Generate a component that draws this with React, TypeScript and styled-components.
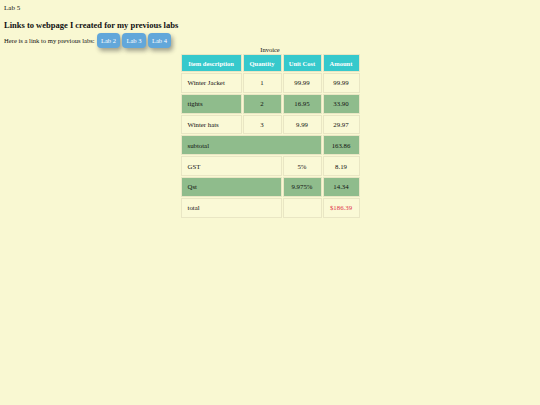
import React from "react";
import styled, { createGlobalStyle } from "styled-components";

const Global = createGlobalStyle`
  html, body { margin: 0; padding: 0; }
  body {
    background: #f9f8d2;
    font-family: "Liberation Serif", "Times New Roman", serif;
    font-size: 6.6px;
    color: #111;
    padding: 4px;
    min-height: 405px;
    box-sizing: border-box;
  }
`;

const Title = styled.div`
  line-height: 9px;
  font-size: 7px;
`;

const Heading = styled.h3`
  font-size: 8.5px;
  font-weight: bold;
  margin: 7px 0 3px;
  line-height: 10px;
`;

const LinkRow = styled.div`
  display: flex;
  align-items: center;
  gap: 2px;
  line-height: 9px;
`;

const LabButton = styled.a`
  display: inline-flex;
  align-items: center;
  justify-content: center;
  width: 23.5px;
  height: 15px;
  background: #62a7da;
  color: #fff;
  border-radius: 4px;
  font-size: 6.5px;
  text-decoration: none;
  box-shadow: 2px 3px 4px rgba(60, 60, 60, 0.45);
`;

const Table = styled.table`
  margin: -2px auto 0;
  width: 181px;
  table-layout: fixed;
  border-collapse: separate;
  border-spacing: 1px;
  font-size: 6.8px;
`;

const Caption = styled.caption`
  font-size: 6.5px;
  line-height: 7px;
`;

const Th = styled.th<{ $w: number }>`
  width: ${(p) => p.$w}px;
  background: #36c9cc;
  color: #fff;
  font-weight: bold;
  font-size: 6.5px;
  height: 16px;
  padding: 0;
  border: 1px solid #e9e6c4;
  white-space: nowrap;
`;

const Td = styled.td<{ $left?: boolean; $red?: boolean }>`
  height: 17.8px;
  padding: 0 6px;
  border: 1px solid #e9e6c4;
  text-align: ${(p) => (p.$left ? "left" : "center")};
  color: ${(p) => (p.$red ? "#e0334a" : "#111")};
`;

const Tr = styled.tr<{ $green?: boolean }>`
  background: ${(p) => (p.$green ? "#8fbc8c" : "#faf9d6")};
`;

export default function App() {
  return (
    <>
      <Global />
      <Title>Lab 5</Title>
      <Heading>Links to webpage I created for my previous labs</Heading>
      <LinkRow>
        <span>Here is a link to my previous labs:</span>
        <LabButton href="#">Lab 2</LabButton>
        <LabButton href="#">Lab 3</LabButton>
        <LabButton href="#">Lab 4</LabButton>
      </LinkRow>
      <Table>
        <Caption>Invoice</Caption>
        <thead>
          <tr>
            <Th $w={59}>Item description</Th>
            <Th $w={37}>Quantity</Th>
            <Th $w={37}>Unit Cost</Th>
            <Th $w={35}>Amount</Th>
          </tr>
        </thead>
        <tbody>
          <Tr>
            <Td $left>Winter Jacket</Td>
            <Td>1</Td>
            <Td>99.99</Td>
            <Td>99.99</Td>
          </Tr>
          <Tr $green>
            <Td $left>tights</Td>
            <Td>2</Td>
            <Td>16.95</Td>
            <Td>33.90</Td>
          </Tr>
          <Tr>
            <Td $left>Winter hats</Td>
            <Td>3</Td>
            <Td>9.99</Td>
            <Td>29.97</Td>
          </Tr>
          <Tr $green>
            <Td $left colSpan={3}>subtotal</Td>
            <Td>163.86</Td>
          </Tr>
          <Tr>
            <Td $left colSpan={2}>GST</Td>
            <Td>5%</Td>
            <Td>8.19</Td>
          </Tr>
          <Tr $green>
            <Td $left colSpan={2}>Qst</Td>
            <Td>9.975%</Td>
            <Td>14.34</Td>
          </Tr>
          <Tr>
            <Td $left colSpan={2}>total</Td>
            <Td></Td>
            <Td $red>$186.39</Td>
          </Tr>
        </tbody>
      </Table>
    </>
  );
}
